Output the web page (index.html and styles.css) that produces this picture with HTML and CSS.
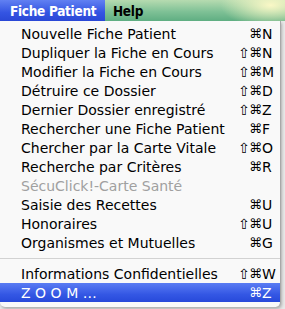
FILE: index.html
```html
<!DOCTYPE html>
<html>
<head>
<meta charset="utf-8">
<link rel="stylesheet" href="styles.css">
</head>
<body>
<div class="menubar">
  <div class="title active">Fiche Patient</div>
  <div class="title help">Help</div>
</div>
<div class="menu">
  <div class="item"><span class="label">Nouvelle Fiche Patient</span><span class="keys"><span class="shift"></span><span class="cmd">⌘</span><span class="k">N</span></span></div>
  <div class="item"><span class="label">Dupliquer la Fiche en Cours</span><span class="keys"><span class="shift">⇧</span><span class="cmd">⌘</span><span class="k">N</span></span></div>
  <div class="item"><span class="label">Modifier la Fiche en Cours</span><span class="keys"><span class="shift">⇧</span><span class="cmd">⌘</span><span class="k">M</span></span></div>
  <div class="item"><span class="label">Détruire ce Dossier</span><span class="keys"><span class="shift">⇧</span><span class="cmd">⌘</span><span class="k">D</span></span></div>
  <div class="item"><span class="label">Dernier Dossier enregistré</span><span class="keys"><span class="shift">⇧</span><span class="cmd">⌘</span><span class="k">Z</span></span></div>
  <div class="item"><span class="label">Rechercher une Fiche Patient</span><span class="keys"><span class="shift"></span><span class="cmd">⌘</span><span class="k">F</span></span></div>
  <div class="item"><span class="label">Chercher par la Carte Vitale</span><span class="keys"><span class="shift">⇧</span><span class="cmd">⌘</span><span class="k">O</span></span></div>
  <div class="item"><span class="label">Recherche par Critères</span><span class="keys"><span class="shift"></span><span class="cmd">⌘</span><span class="k">R</span></span></div>
  <div class="item disabled"><span class="label">SécuClick!-Carte Santé</span></div>
  <div class="item"><span class="label">Saisie des Recettes</span><span class="keys"><span class="shift"></span><span class="cmd">⌘</span><span class="k">U</span></span></div>
  <div class="item"><span class="label">Honoraires</span><span class="keys"><span class="shift">⇧</span><span class="cmd">⌘</span><span class="k">U</span></span></div>
  <div class="item"><span class="label">Organismes et Mutuelles</span><span class="keys"><span class="shift"></span><span class="cmd">⌘</span><span class="k">G</span></span></div>
  <div class="sep"></div>
  <div class="item"><span class="label">Informations Confidentielles</span><span class="keys"><span class="shift">⇧</span><span class="cmd">⌘</span><span class="k">W</span></span></div>
  <div class="item selected"><span class="label zoom">ZOOM…</span><span class="keys"><span class="shift"></span><span class="cmd">⌘</span><span class="k">Z</span></span></div>
</div>
</body>
</html>
```
FILE: styles.css
```css
html, body {
  margin: 0;
  padding: 0;
}
body {
  width: 285px;
  height: 309px;
  overflow: hidden;
  background: #e8e8e8;
  font-family: "DejaVu Sans", "Lucida Grande", sans-serif;
  font-size: 14px;
  color: #000;
}
.menubar {
  display: flex;
  height: 21px;
}
.title {
  display: flex;
  align-items: center;
  font-family: "DejaVu Sans Condensed", "DejaVu Sans", sans-serif;
  font-weight: bold;
  font-size: 13.5px;
  letter-spacing: -0.3px;
}
.title.active {
  width: 105px;
  box-sizing: border-box;
  padding-left: 10px;
  color: #fff;
  background: linear-gradient(to bottom, #6180f2, #3454e2 60%, #2a48d6);
}
.title.help {
  flex: 1;
  padding-left: 8px;
  color: #000;
  background:
    radial-gradient(ellipse 50px 22px at 92% 25%, rgba(255, 250, 200, 0.95), rgba(255, 250, 200, 0) 100%),
    linear-gradient(to bottom, #b6dbb0, #7fc196 55%, #5fae82);
}
.menu {
  width: 281px;
  box-sizing: border-box;
  padding: 3px 0 5px;
  background: #f9f9f9;
  border-right: 1px solid #a8a8a8;
  border-radius: 0 0 5px 5px;
  box-shadow: 1px 2px 3px rgba(0, 0, 0, 0.25);
}
.item {
  display: flex;
  align-items: center;
  height: 19px;
  padding-left: 21px;
  padding-right: 2px;
  white-space: nowrap;
}
.label {
  flex: 1;
}
.keys {
  display: flex;
  align-items: center;
  flex-shrink: 0;
  width: 40px;
}
.shift,
.cmd,
.k {
  flex-shrink: 0;
  line-height: 1;
}
.shift {
  width: 11px;
}
.cmd {
  width: 13px;
  font-size: 13px;
}
.k {
  width: 16px;
}
.disabled {
  color: #a0a0a0;
}
.sep {
  height: 1px;
  background: #d2d2d2;
  margin: 6px 0 5px;
}
.selected {
  color: #fff;
  background: linear-gradient(to bottom, #5a7cf3, #3457e4 60%, #2749da);
}
.zoom {
  letter-spacing: 4.5px;
}
```
